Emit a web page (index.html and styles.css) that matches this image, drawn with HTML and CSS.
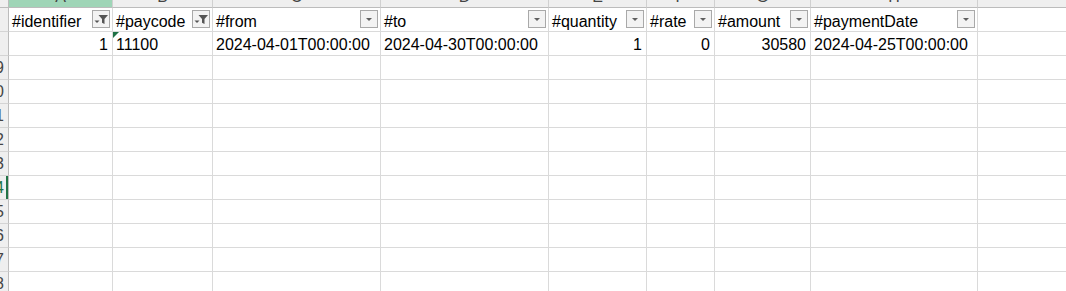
FILE: index.html
```html
<!DOCTYPE html>
<html>
<head>
<meta charset="utf-8">
<link rel="stylesheet" href="styles.css">
</head>
<body>
<div class="sheet">
  <!-- column header strip -->
  <div class="ch corner"></div>
  <div class="ch sel"><span>A</span></div>
  <div class="ch"><span>B</span></div>
  <div class="ch"><span>C</span></div>
  <div class="ch"><span>D</span></div>
  <div class="ch"><span>E</span></div>
  <div class="ch"><span>F</span></div>
  <div class="ch"><span>G</span></div>
  <div class="ch"><span>H</span></div>
  <div class="ch last"><span>I</span></div>

  <!-- row 1: table headers -->
  <div class="rh"><span>1</span></div>
  <div class="c hd"><span class="lbl">#identifier</span><span class="fbtn"><svg width="16" height="16" viewBox="0 0 16 16"><polygon points="5.5,4 15,4 11.5,8 11.5,13 9,11.8 9,8" fill="#555"/><polygon points="1.5,9.5 6.5,9.5 4,12" fill="#555"/></svg></span></div>
  <div class="c hd"><span class="lbl">#paycode</span><span class="fbtn"><svg width="16" height="16" viewBox="0 0 16 16"><polygon points="5.5,4 15,4 11.5,8 11.5,13 9,11.8 9,8" fill="#555"/><polygon points="1.5,9.5 6.5,9.5 4,12" fill="#555"/></svg></span></div>
  <div class="c hd"><span class="lbl">#from</span><span class="fbtn"><svg width="16" height="16" viewBox="0 0 16 16"><polygon points="5,7 11,7 8,10" fill="#5f5f5f"/></svg></span></div>
  <div class="c hd"><span class="lbl">#to</span><span class="fbtn"><svg width="16" height="16" viewBox="0 0 16 16"><polygon points="5,7 11,7 8,10" fill="#5f5f5f"/></svg></span></div>
  <div class="c hd"><span class="lbl">#quantity</span><span class="fbtn"><svg width="16" height="16" viewBox="0 0 16 16"><polygon points="5,7 11,7 8,10" fill="#5f5f5f"/></svg></span></div>
  <div class="c hd"><span class="lbl">#rate</span><span class="fbtn"><svg width="16" height="16" viewBox="0 0 16 16"><polygon points="5,7 11,7 8,10" fill="#5f5f5f"/></svg></span></div>
  <div class="c hd"><span class="lbl">#amount</span><span class="fbtn"><svg width="16" height="16" viewBox="0 0 16 16"><polygon points="5,7 11,7 8,10" fill="#5f5f5f"/></svg></span></div>
  <div class="c hd"><span class="lbl">#paymentDate</span><span class="fbtn"><svg width="16" height="16" viewBox="0 0 16 16"><polygon points="5,7 11,7 8,10" fill="#5f5f5f"/></svg></span></div>
  <div class="c last"></div>

  <!-- row 2: data -->
  <div class="rh"><span>2</span></div>
  <div class="c d num">1</div>
  <div class="c d txt"><i class="warn"></i>11100</div>
  <div class="c d">2024-04-01T00:00:00</div>
  <div class="c d">2024-04-30T00:00:00</div>
  <div class="c d num">1</div>
  <div class="c d num">0</div>
  <div class="c d num">30580</div>
  <div class="c d">2024-04-25T00:00:00</div>
  <div class="c last"></div>

  <div class="rh"><span>19</span></div><div class="c"></div><div class="c"></div><div class="c"></div><div class="c"></div><div class="c"></div><div class="c"></div><div class="c"></div><div class="c"></div><div class="c last"></div>
  <div class="rh"><span>20</span></div><div class="c"></div><div class="c"></div><div class="c"></div><div class="c"></div><div class="c"></div><div class="c"></div><div class="c"></div><div class="c"></div><div class="c last"></div>
  <div class="rh"><span>21</span></div><div class="c"></div><div class="c"></div><div class="c"></div><div class="c"></div><div class="c"></div><div class="c"></div><div class="c"></div><div class="c"></div><div class="c last"></div>
  <div class="rh"><span>22</span></div><div class="c"></div><div class="c"></div><div class="c"></div><div class="c"></div><div class="c"></div><div class="c"></div><div class="c"></div><div class="c"></div><div class="c last"></div>
  <div class="rh"><span>23</span></div><div class="c"></div><div class="c"></div><div class="c"></div><div class="c"></div><div class="c"></div><div class="c"></div><div class="c"></div><div class="c"></div><div class="c last"></div>
  <div class="rh active"><span>24</span></div><div class="c"></div><div class="c"></div><div class="c"></div><div class="c"></div><div class="c"></div><div class="c"></div><div class="c"></div><div class="c"></div><div class="c last"></div>
  <div class="rh"><span>25</span></div><div class="c"></div><div class="c"></div><div class="c"></div><div class="c"></div><div class="c"></div><div class="c"></div><div class="c"></div><div class="c"></div><div class="c last"></div>
  <div class="rh"><span>26</span></div><div class="c"></div><div class="c"></div><div class="c"></div><div class="c"></div><div class="c"></div><div class="c"></div><div class="c"></div><div class="c"></div><div class="c last"></div>
  <div class="rh"><span>27</span></div><div class="c"></div><div class="c"></div><div class="c"></div><div class="c"></div><div class="c"></div><div class="c"></div><div class="c"></div><div class="c"></div><div class="c last"></div>
  <div class="rh"><span>28</span></div><div class="c"></div><div class="c"></div><div class="c"></div><div class="c"></div><div class="c"></div><div class="c"></div><div class="c"></div><div class="c"></div><div class="c last"></div>
</div>
</body>
</html>
```

FILE: styles.css
```css
html, body {
  margin: 0;
  padding: 0;
  background: #ffffff;
  overflow: hidden;
}

.sheet {
  display: grid;
  grid-template-columns: 9px 104px 100px 168px 168px 98px 68px 96px 167px 1fr;
  grid-template-rows: 8px 24px 24px repeat(10, 24px);
  width: 1066px;
  height: 291px;
  overflow: hidden;
  font-family: "Liberation Sans", Arial, sans-serif;
  font-size: 16px;
  color: #000;
}

.sheet > div {
  box-sizing: border-box;
  min-width: 0;
}

/* column header strip */
.ch {
  background: #efefef;
  border-right: 1px solid #d0d0d0;
  border-bottom: 1px solid #bcbcbc;
  overflow: hidden;
  text-align: center;
  color: #444;
}
.ch span {
  display: block;
  line-height: 20px;
  margin-top: -13px;
}
.ch.sel {
  background: #9fd5b7;
}
.ch.corner {
  border-right-color: #bcbcbc;
}
.ch.last {
  border-right: none;
}
.ch.last span {
  width: 220px;
}

/* row headers */
.rh {
  background: #efefef;
  border-right: 1px solid #bcbcbc;
  border-bottom: 1px solid #d4d4d4;
  overflow: hidden;
  color: #444;
}
.rh span {
  display: block;
  width: 26px;
  margin-left: -18px;
  text-align: center;
  line-height: 23px;
  white-space: nowrap;
}
.rh.active {
  box-shadow: inset -2px 0 0 #217346;
  color: #217346;
}

/* grid cells */
.c {
  border-right: 1px solid #dadada;
  border-bottom: 1px solid #dadada;
  white-space: nowrap;
  overflow: hidden;
}
.c.last {
  border-right: none;
}

/* table header cells */
.hd {
  display: flex;
  align-items: flex-start;
}
.hd .lbl {
  flex: 1;
  padding: 4px 0 0 3px;
  line-height: 20px;
  overflow: hidden;
}
.fbtn {
  flex: none;
  width: 18px;
  height: 18px;
  box-sizing: border-box;
  margin: 2px 2px 0 0;
  border: 1px solid #a9a9a9;
  background: #f3f3f3;
  display: flex;
}

/* data cells */
.d {
  padding: 3px 3px 0 3px;
  line-height: 20px;
}
.d.num {
  text-align: right;
  padding-right: 4px;
}
.d.txt {
  position: relative;
}
.warn {
  position: absolute;
  left: 0;
  top: 0;
  width: 0;
  height: 0;
  border-top: 6px solid #1e7145;
  border-right: 6px solid transparent;
}
```
